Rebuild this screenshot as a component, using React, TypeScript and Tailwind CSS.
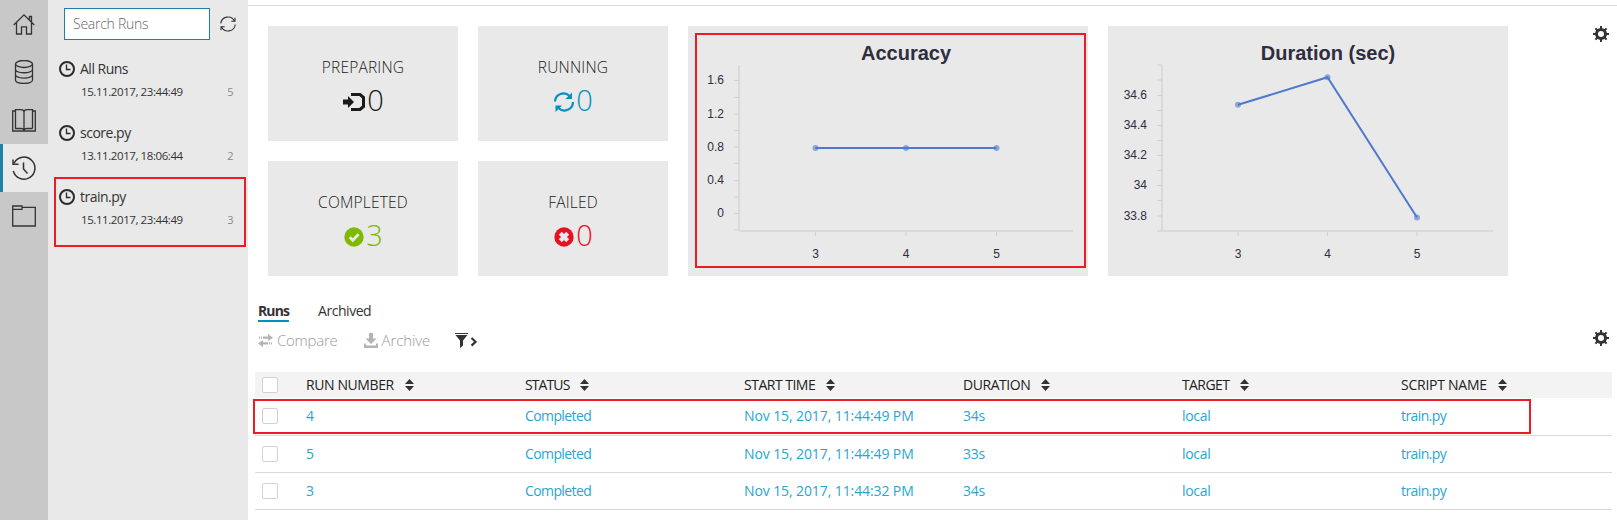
import type { ReactNode } from "react";

const railIcon = "h-6 w-6 fill-none stroke-[#333] stroke-[1.3]";

function HomeIcon() {
  return (
    <svg viewBox="0 0 24 24" className={railIcon}>
      <path d="M1.700 13 12 2.800 22.300 13M4.500 10.500V22H9.500V14.800H14.500V22H19.500V10.500M17.500 8V4.500H19.500V10" />
    </svg>
  );
}

function DatabaseIcon() {
  return (
    <svg viewBox="0 0 24 24" className={railIcon}>
      <ellipse cx="12" cy="4" rx="8.500" ry="3.500" />
      <path d="M3.500 4V20C3.500 24.600 20.500 24.600 20.500 20V4M3.500 9.300C3.500 13.900 20.500 13.900 20.500 9.300M3.500 14.600C3.500 19.200 20.500 19.200 20.500 14.600" />
    </svg>
  );
}

function BookIcon() {
  return (
    <svg viewBox="0 0 24 24" className={railIcon}>
      <path d="M3.500 3H.700V23H23.300V3H20.500M3.500 20.500V1.700H9C11 1.700 12 2.800 12 4V22.500C12 21.300 11 20.500 9 20.500ZM20.500 20.500V1.700H15C13 1.700 12 2.800 12 4M12 22.500C12 21.300 13 20.500 15 20.500H20.500" />
    </svg>
  );
}

function HistoryIcon() {
  return (
    <svg viewBox="0 0 24 24" className="h-6 w-6 fill-none stroke-[#333] stroke-[1.5]">
      <path d="M1.300 15A11 11 0 1 0 2.200 7M1 3.500V8.200H6.500M11.500 6.500V13L15.500 17.500" />
    </svg>
  );
}

function FolderIcon() {
  return (
    <svg viewBox="0 0 24 24" className={railIcon}>
      <path d="M.700 2H10V5.300H.700ZM10 3.300H23.300V22H.700V2" />
    </svg>
  );
}

function RefreshIcon() {
  return (
    <svg viewBox="0 0 16 16" className="h-4 w-4 fill-none stroke-[#333] stroke-[1.1]">
      <path d="M.800 7.500A7.200 7.200 0 0 1 14.400 5M15.200 8.500A7.200 7.200 0 0 1 1.600 11M15 1.800V5.300H11.300M1 14.200V10.700H4.700" />
    </svg>
  );
}

function ClockIcon() {
  return (
    <svg viewBox="0 0 16 16" className="h-4 w-4 shrink-0 fill-none stroke-[#2b2b2b]">
      <circle cx="8" cy="8" r="7" strokeWidth="2" />
      <path d="M7.500 3.500V8.500H11.500" strokeWidth="1.300" />
    </svg>
  );
}

function GearIcon() {
  return (
    <svg viewBox="-8 -8 16 16" className="h-4 w-4 fill-none stroke-[#333]">
      <circle r="4.500" strokeWidth="3" />
      <path
        d="M0-5V-8M0 5V8M-5 0H-8M5 0H8M-3.500-3.500-5.600-5.600M3.500 3.500 5.600 5.600M-3.500 3.500-5.600 5.600M3.500-3.500 5.600-5.600"
        strokeWidth="2"
      />
    </svg>
  );
}

function PreparingIcon() {
  return (
    <svg viewBox="0 0 22 18" className="h-[18px] w-[22px]">
      <path d="M0 6.500H5V3L11 9 5 15V11.500H0Z" fill="#1a1a1a" />
      <path d="M8 1.500H17L20.500 4.500V13.500L17 16.500H8" fill="none" stroke="#1a1a1a" strokeWidth="3" />
    </svg>
  );
}

function RunningIcon() {
  return (
    <svg viewBox="0 0 20 20" className="h-5 w-5">
      <path d="M1 9.500A8.500 8.500 0 0 1 15.500 4M19 10A8.500 8.500 0 0 1 4.500 16" fill="none" stroke="#0091c2" strokeWidth="2.200" />
      <path d="M18 .500V7H11.500ZM1.500 20V13.500H8Z" fill="#0091c2" />
    </svg>
  );
}

function CompletedIcon() {
  return (
    <svg viewBox="0 0 20 20" className="h-5 w-5">
      <circle cx="10" cy="10" r="9.700" fill="#80ba00" />
      <path d="M5.700 10.300 8.800 13.300 14.600 7.300" fill="none" stroke="#e9e9e9" strokeWidth="2.700" />
    </svg>
  );
}

function FailedIcon() {
  return (
    <svg viewBox="0 0 20 20" className="h-5 w-5">
      <circle cx="10" cy="10" r="9.700" fill="#e81123" />
      <path d="M6.300 6.300 13.700 13.700M13.700 6.300 6.300 13.700" stroke="#e9e9e9" strokeWidth="4.200" />
    </svg>
  );
}

function CompareIcon() {
  return (
    <svg viewBox="0 0 15 13" className="h-[13px] w-[15px] fill-[#b3b3b3]">
      <path d="M5 2.500H10V0L15 3.700 10 7V4.700H5ZM3 2.500H4V4.700H3ZM1 2.500H2V4.700H1ZM10 8.300H5V6L0 9.500 5 13V10.500H10ZM11 8.300H12V10.500H11ZM13 8.300H14V10.500H13Z" />
    </svg>
  );
}

function ArchiveIcon() {
  return (
    <svg viewBox="0 0 14 15" className="h-[15px] w-[14px] fill-[#b3b3b3]">
      <path d="M5 0H9V5.500H12.500L7 11 1.500 5.500H5ZM0 10.500H2V12.500H12V10.500H14V15H0Z" />
    </svg>
  );
}

function FilterIcon() {
  return (
    <svg viewBox="0 0 22 15" className="h-[15px] w-[22px]">
      <path d="M0 0H13V1H0ZM.500 2H12.500L8 7.500V12.500L5 15V7.500Z" fill="#333" />
      <path d="M16.500 5 20.500 8.800 16.500 12.600" fill="none" stroke="#333" strokeWidth="2.200" />
    </svg>
  );
}

function SortIcon() {
  return (
    <svg viewBox="0 0 9 12" className="h-3 w-[9px] fill-[#333]">
      <path d="M4.500 0 9 5H0ZM0 7H9L4.500 12Z" />
    </svg>
  );
}

const railItems = [
  { key: "home", icon: <HomeIcon />, active: false },
  { key: "data", icon: <DatabaseIcon />, active: false },
  { key: "notebooks", icon: <BookIcon />, active: false },
  { key: "history", icon: <HistoryIcon />, active: true },
  { key: "files", icon: <FolderIcon />, active: false },
];

const runGroups = [
  { name: "All Runs", date: "15.11.2017, 23:44:49", count: 5 },
  { name: "score.py", date: "13.11.2017, 18:06:44", count: 2 },
  { name: "train.py", date: "15.11.2017, 23:44:49", count: 3 },
];

const columns = [
  { title: "RUN NUMBER", head: "tracking-[-0.4px]", cell: "tracking-[-0.2px]" },
  { title: "STATUS", head: "tracking-[-0.9px]", cell: "tracking-[-0.6px]" },
  { title: "START TIME", head: "tracking-[-0.5px]", cell: "tracking-[-0.1px]" },
  { title: "DURATION", head: "tracking-[-0.45px]", cell: "tracking-[-0.2px]" },
  { title: "TARGET", head: "tracking-[-0.6px]", cell: "tracking-[-0.3px]" },
  { title: "SCRIPT NAME", head: "tracking-[-0.25px]", cell: "tracking-[-0.6px]" },
];

const rows = [
  { height: "h-[38px] pb-px", cells: ["4", "Completed", "Nov 15, 2017, 11:44:49 PM", "34s", "local", "train.py"] },
  { height: "h-[37px]", cells: ["5", "Completed", "Nov 15, 2017, 11:44:49 PM", "33s", "local", "train.py"] },
  { height: "h-[37px]", cells: ["3", "Completed", "Nov 15, 2017, 11:44:32 PM", "34s", "local", "train.py"] },
];

function Checkbox() {
  return <span className="ml-[7px] mr-7 h-4 w-4 shrink-0 rounded-[2px] border border-[#d2d2d2] bg-white" />;
}

function StatCard({ label, value, color, icon }: { label: string; value: number; color: string; icon: ReactNode }) {
  return (
    <div className="flex flex-col items-center bg-[#e9e9e9] pt-[31px]">
      <div className="text-[15.5px] leading-5 font-light tracking-[0.2px] text-[#1a1a1a]">{label}</div>
      <div className={"mt-[7px] flex h-8 items-center gap-[3px] text-[29px] leading-8 font-light " + color}>
        <span className="pt-[3px]">{icon}</span>
        <span className="-ml-px tracking-[-1px]">{value}</span>
      </div>
    </div>
  );
}

type ChartProps = {
  title: string;
  titleX: number;
  axisX: number;
  axisStart: number;
  axisEnd: number;
  yTicks: number[];
  yLabels: [string, number][];
  labelX: number;
  points: [number, number][];
};

function Chart({ title, titleX, axisX, axisStart, axisEnd, yTicks, yLabels, labelX, points }: ChartProps) {
  return (
    <svg viewBox="0 0 400 250" className="block h-[250px] w-[400px] bg-[#e9e9e9] font-['Liberation_Sans',sans-serif]">
      <text x={titleX} y="34" textAnchor="middle" fontSize="20" fontWeight="700" fill="#2e2e40">
        {title}
      </text>
      <g stroke="#dadada" fill="none">
        <path d={`M${axisX} 39V205`} strokeWidth="2" />
        <path d={`M${axisStart} 205H${axisEnd}`} strokeWidth="2" />
        {yTicks.map((y) => (
          <path key={y} d={`M${axisX - 5} ${y}H${axisX}`} stroke="#d0d0d0" />
        ))}
        {points.map(([x]) => (
          <path key={x} d={`M${x} 206V210`} stroke="#d0d0d0" />
        ))}
      </g>
      <g fontSize="12" fill="#2e2e40">
        {yLabels.map(([text, y]) => (
          <text key={text} x={labelX} y={y} textAnchor="end">
            {text}
          </text>
        ))}
        {points.map(([x], i) => (
          <text key={x} x={x} y="232" textAnchor="middle">
            {i + 3}
          </text>
        ))}
      </g>
      <polyline points={points.map((p) => p.join(",")).join(" ")} fill="none" stroke="#4e79cc" strokeWidth="2" />
      {points.map(([x, y]) => (
        <circle key={x} cx={x} cy={y} r="3" fill="#4e79cc" fillOpacity="0.6" />
      ))}
    </svg>
  );
}

export default function App() {
  return (
    <div className="relative flex h-[520px] w-[1617px] overflow-hidden bg-white font-['Open_Sans','Noto_Sans',sans-serif] text-[#333]">
      <nav className="flex w-12 shrink-0 flex-col bg-[#c8c8c8]">
        {railItems.map((item) => (
          <div
            key={item.key}
            className={
              item.active
                ? "flex h-12 items-center border-l-[3px] border-[#1f80a8] bg-[#e9e9e9] pl-[9px]"
                : "flex h-12 items-center pl-3"
            }
          >
            {item.icon}
          </div>
        ))}
      </nav>

      <aside className="w-[200px] shrink-0 bg-[#e9e9e9]">
        <div className="flex h-12 items-center pl-4">
          <div className="flex h-8 w-[146px] items-center border border-[#1f80a8] bg-white pl-2 text-sm font-light tracking-[-0.25px] text-[#666]">
            Search Runs
          </div>
          <div className="ml-[10px]">
            <RefreshIcon />
          </div>
        </div>
        {runGroups.map((group) => (
          <div key={group.name} className="h-16 pt-[11px] pl-[11px]">
            <div className="flex h-5 items-center gap-[5px] text-sm tracking-[-0.5px]">
              <ClockIcon />
              <span>{group.name}</span>
            </div>
            <div className="mt-[3px] flex h-5 items-center justify-between pr-[15px] pl-[22px] text-[11.5px] tracking-[-0.42px]">
              <span>{group.date}</span>
              <span className="text-[11px] text-[#8a8a8a]">{group.count}</span>
            </div>
          </div>
        ))}
      </aside>

      <main className="min-w-0 flex-1 pt-[5px]">
        <div className="h-px bg-[#dcdcdc]" />
        <section className="flex pt-5 pl-5">
          <div className="grid h-[250px] w-[400px] grid-cols-2 grid-rows-2 gap-5">
            <StatCard label="PREPARING" value={0} color="text-[#1a1a1a]" icon={<PreparingIcon />} />
            <StatCard label="RUNNING" value={0} color="text-[#0091c2]" icon={<RunningIcon />} />
            <StatCard label="COMPLETED" value={3} color="text-[#80ba00]" icon={<CompletedIcon />} />
            <StatCard label="FAILED" value={0} color="text-[#e81123]" icon={<FailedIcon />} />
          </div>
          <div className="ml-5">
            <Chart
              title="Accuracy"
              titleX={218}
              axisX={51}
              axisStart={51}
              axisEnd={385}
              yTicks={[54.5, 71.5, 88, 104.5, 121, 137.5, 154.5, 171, 187.5, 204]}
              yLabels={[["1.6", 58], ["1.2", 92], ["0.8", 125], ["0.4", 158], ["0", 191]]}
              labelX={36}
              points={[[127.5, 122], [218, 122], [308.5, 122]]}
            />
          </div>
          <div className="ml-5">
            <Chart
              title="Duration (sec)"
              titleX={220}
              axisX={54}
              axisStart={49}
              axisEnd={385}
              yTicks={[39, 54, 69.5, 84.5, 99.5, 114.5, 129.5, 144.5, 159.5, 174.5, 190]}
              yLabels={[["34.6", 73], ["34.4", 103], ["34.2", 133], ["34", 163], ["33.8", 194]]}
              labelX={39}
              points={[[130, 78.8], [219.5, 51.3], [309, 191.5]]}
            />
          </div>
          <div className="ml-[85px]">
            <GearIcon />
          </div>
        </section>

        <div className="mt-[23px] ml-[10px] flex h-[23px] gap-[29px] text-sm">
          <span className="border-b-2 border-[#0091c2] leading-6 font-bold tracking-[-0.9px]">Runs</span>
          <span className="leading-6 tracking-[-0.45px]">Archived</span>
        </div>

        <div className="mt-[6px] ml-[10px] flex h-6 w-[1351px] items-center text-[15px] font-light text-[#9a9a9a]">
          <CompareIcon />
          <span className="ml-1 tracking-[-0.25px]">Compare</span>
          <span className="ml-[26px]">
            <ArchiveIcon />
          </span>
          <span className="ml-1 tracking-[-0.1px]">Archive</span>
          <span className="ml-[25px]">
            <FilterIcon />
          </span>
          <span className="ml-auto pb-1">
            <GearIcon />
          </span>
        </div>

        <div className="mt-5 ml-[7px] w-[1357px] text-sm">
          <div className="flex h-[26px] items-center bg-[#f3f3f3] text-[#222]">
            <Checkbox />
            {columns.map((c) => (
              <div key={c.title} className="flex w-[219px] shrink-0 items-center gap-[11px] last:w-[200px]">
                <span className={c.head}>{c.title}</span>
                <SortIcon />
              </div>
            ))}
          </div>
          {rows.map((row) => (
            <div key={row.cells[0]} className={"flex items-center border-b border-[#d9d9d9] text-[#2ba5d0] " + row.height}>
              <Checkbox />
              {row.cells.map((cell, i) => (
                <div key={i} className={"w-[219px] shrink-0 last:w-[200px] " + columns[i].cell}>
                  {cell}
                </div>
              ))}
            </div>
          ))}
        </div>
      </main>

      <div className="absolute top-[177px] left-[54px] h-[70px] w-[192px] border-2 border-[#ed1c24]" />
      <div className="absolute top-[33px] left-[695px] h-[235px] w-[391px] border-2 border-[#ed1c24]" />
      <div className="absolute top-[399px] left-[253px] h-[35px] w-[1278px] border-2 border-[#ed1c24]" />
    </div>
  );
}
